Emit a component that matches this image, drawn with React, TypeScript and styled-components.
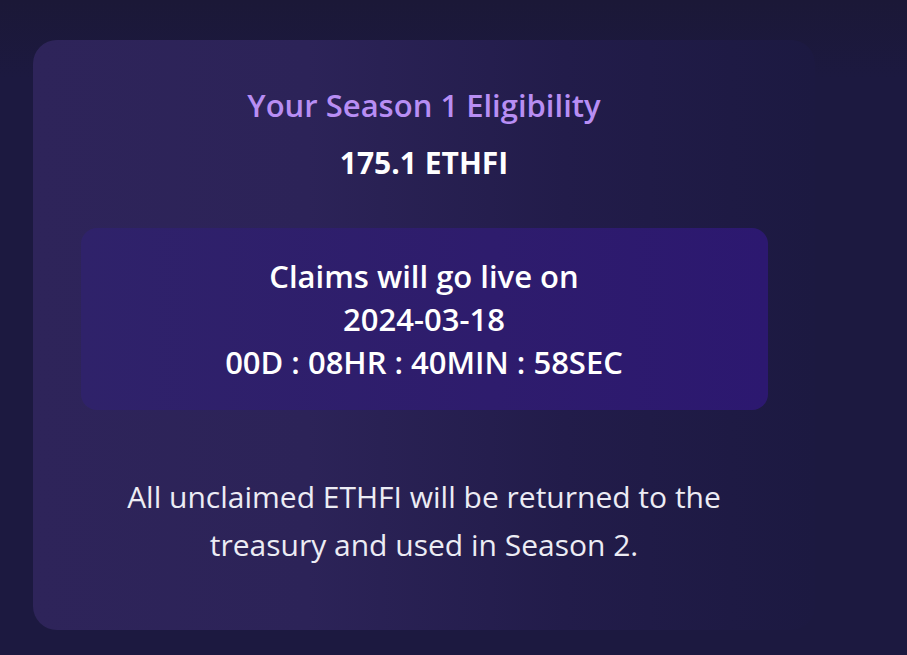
import React from "react";
import styled, { createGlobalStyle } from "styled-components";

const Global = createGlobalStyle`
  html, body {
    margin: 0;
    padding: 0;
    width: 907px;
    height: 655px;
    overflow: hidden;
    background: #1c1940;
    font-family: "Open Sans", "Noto Sans", sans-serif;
  }
`;

const Page = styled.div`
  width: 907px;
  height: 655px;
  box-sizing: border-box;
  padding: 40px 0 0 33px;
  background: linear-gradient(180deg, #1b1837 0%, #1c1940 12%, #1c1940 100%);
`;

const Card = styled.div`
  width: 782px;
  height: 590px;
  box-sizing: border-box;
  border-radius: 24px;
  background: linear-gradient(90deg, #2e245a 0%, #2c2358 35%, #221c4a 68%, #1c1941 100%);
  display: flex;
  flex-direction: column;
  align-items: center;
  padding-top: 45px;
`;

const Title = styled.div`
  color: #b88ef4;
  font-size: 31px;
  font-weight: 600;
  line-height: 40px;
`;

const Amount = styled.div`
  color: #ffffff;
  font-size: 30px;
  font-weight: 700;
  line-height: 40px;
  margin-top: 18px;
`;

const ClaimBox = styled.div`
  width: 687px;
  height: 182px;
  margin-top: 45px;
  border-radius: 16px;
  background: linear-gradient(90deg, #2f226a 0%, #2e1c6d 60%, #2c1870 100%);
  display: flex;
  flex-direction: column;
  align-items: center;
  justify-content: center;
`;

const ClaimLine = styled.div`
  color: #ffffff;
  font-size: 31px;
  font-weight: 600;
  line-height: 43px;
`;

const Note = styled.p`
  margin: 63px 0 0;
  color: #ececf4;
  font-size: 30px;
  font-weight: 400;
  line-height: 48px;
  text-align: center;
  width: 660px;
`;

export default function App() {
  return (
    <>
      <Global />
      <Page>
        <Card>
          <Title>Your Season 1 Eligibility</Title>
          <Amount>175.1 ETHFI</Amount>
          <ClaimBox>
            <ClaimLine>Claims will go live on</ClaimLine>
            <ClaimLine>2024-03-18</ClaimLine>
            <ClaimLine>00D : 08HR : 40MIN : 58SEC</ClaimLine>
          </ClaimBox>
          <Note>
            All unclaimed ETHFI will be returned to the treasury and used in Season 2.
          </Note>
        </Card>
      </Page>
    </>
  );
}
